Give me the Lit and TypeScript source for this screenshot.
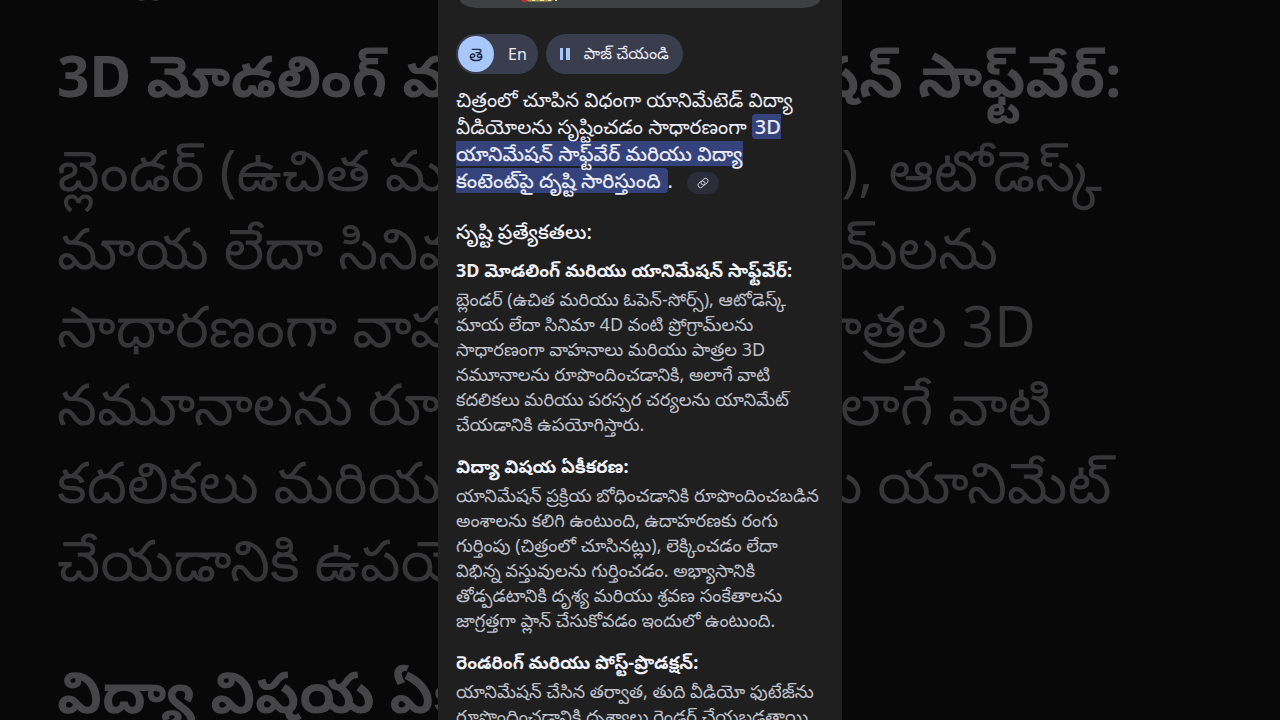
import { LitElement, html, css } from "lit";
import { customElement, property } from "lit/decorators.js";

interface Section {
  title: string;
  lines: string[];
}

const HEADING = "సృష్టి ప్రత్యేకతలు:";

const SECTIONS: Section[] = [
  {
    title: "3D మోడలింగ్ మరియు యానిమేషన్ సాఫ్ట్‌వేర్:",
    lines: [
      "బ్లెండర్ (ఉచిత మరియు ఓపెన్-సోర్స్), ఆటోడెస్క్",
      "మాయ లేదా సినిమా 4D వంటి ప్రోగ్రామ్‌లను",
      "సాధారణంగా వాహనాలు మరియు పాత్రల 3D",
      "నమూనాలను రూపొందించడానికి, అలాగే వాటి",
      "కదలికలు మరియు పరస్పర చర్యలను యానిమేట్",
      "చేయడానికి ఉపయోగిస్తారు.",
    ],
  },
  {
    title: "విద్యా విషయ ఏకీకరణ:",
    lines: [
      "యానిమేషన్ ప్రక్రియ బోధించడానికి రూపొందించబడిన",
      "అంశాలను కలిగి ఉంటుంది, ఉదాహరణకు రంగు",
      "గుర్తింపు (చిత్రంలో చూసినట్లు), లెక్కించడం లేదా",
      "విభిన్న వస్తువులను గుర్తించడం. అభ్యాసానికి",
      "తోడ్పడటానికి దృశ్య మరియు శ్రవణ సంకేతాలను",
      "జాగ్రత్తగా ప్లాన్ చేసుకోవడం ఇందులో ఉంటుంది.",
    ],
  },
  {
    title: "రెండరింగ్ మరియు పోస్ట్-ప్రొడక్షన్:",
    lines: [
      "యానిమేషన్ చేసిన తర్వాత, తుది వీడియో ఫుటేజ్‌ను",
      "రూపొందించడానికి దృశ్యాలు రెండర్ చేయబడతాయి",
    ],
  },
];

@customElement("answer-sections")
export class AnswerSections extends LitElement {
  @property({ attribute: false }) sections: Section[] = [];

  static styles = css`
    :host {
      display: block;
    }
    .heading,
    .title,
    .text {
      margin: 0;
      white-space: nowrap;
    }
    .heading {
      font-size: var(--heading-size);
      line-height: var(--heading-line);
      margin-bottom: var(--heading-gap);
      font-weight: 500;
      color: var(--strong);
    }
    .section {
      margin-bottom: var(--section-gap);
    }
    .title {
      font-size: var(--title-size);
      line-height: var(--title-line);
      margin-bottom: var(--title-gap);
      font-weight: 700;
      color: var(--strong);
    }
    .text {
      font-size: var(--text-size);
      line-height: var(--text-line);
      color: var(--soft);
    }
    .line {
      display: block;
    }
  `;

  render() {
    return html`
      <h2 class="heading">${HEADING}</h2>
      ${this.sections.map(
        (s) => html`<section class="section">
          <h3 class="title">${s.title}</h3>
          <p class="text">${s.lines.map((l) => html`<span class="line">${l}</span> `)}</p>
        </section>`
      )}
    `;
  }
}

@customElement("app-root")
export class AppRoot extends LitElement {
  static styles = css`
    :host {
      display: grid;
      height: 100vh;
      overflow: hidden;
      background: #080808;
      font-family: "Noto Sans", "Noto Sans Telugu", sans-serif;
    }
    .backdrop,
    .panel {
      grid-area: 1 / 1;
      min-width: 0;
      min-height: 0;
      overflow: hidden;
    }
    .backdrop {
      --strong: #454548;
      --soft: #363638;
      --heading-size: 63px;
      --heading-line: 80px;
      --heading-gap: 38px;
      --title-size: 57px;
      --title-line: 94px;
      --title-gap: 8px;
      --text-size: 57px;
      --text-line: 78px;
      --section-gap: 46px;
      padding-left: 57px;
    }
    .scrolled {
      margin-top: -90px;
    }
    .panel {
      --strong: #f0f1fb;
      --soft: #bfc1cc;
      --heading-size: 20px;
      --heading-line: 28px;
      --heading-gap: 9px;
      --title-size: 18px;
      --title-line: 30px;
      --title-gap: 2px;
      --text-size: 18px;
      --text-line: 25px;
      --section-gap: 14px;
      justify-self: center;
      box-sizing: border-box;
      width: min(100%, 404px);
      padding: 0 18px;
      background: #1f1f1f;
      color: #e9eaf4;
    }
    .card {
      display: flex;
      height: 8px;
      padding-left: 60px;
      margin: 0 4px 26px;
      border-radius: 0 0 22px 22px / 0 0 8px 8px;
      background: #3c4043;
    }
    .thumb {
      display: block;
      width: 38px;
      height: 2px;
    }
    .chips {
      display: flex;
      gap: 8px;
      margin-bottom: 12px;
    }
    .langs {
      display: flex;
      align-items: center;
      box-sizing: border-box;
      height: 40px;
      padding: 0 2px;
      border-radius: 20px;
      background: #3a3d4e;
    }
    button {
      border: 0;
      margin: 0;
      padding: 0;
      font: inherit;
      font-size: 16px;
      color: #e9eaf4;
      background: none;
      white-space: nowrap;
    }
    .lang {
      height: 36px;
      padding: 0 9px 0 14px;
      line-height: 34px;
    }
    .lang.active {
      width: 36px;
      padding: 0;
      border-radius: 50%;
      background: #a8c7fa;
      color: #1d2a45;
      font-size: 18px;
    }
    .pause {
      display: flex;
      align-items: center;
      gap: 12px;
      height: 40px;
      padding: 0 14px 0 12px;
      border-radius: 20px;
      background: #3a3d4e;
    }
    .intro {
      isolation: isolate;
      margin: 0 0 24px;
      font-size: 20px;
      line-height: 27px;
      white-space: nowrap;
    }
    .line {
      display: block;
    }
    mark {
      position: relative;
      display: inline-block;
      line-height: 27px;
      background: none;
      color: inherit;
      font-weight: 500;
    }
    mark::before {
      content: "";
      position: absolute;
      inset: 1px 0;
      z-index: -1;
      border-radius: inherit;
      background: #35437c;
    }
    .start {
      padding-left: 3px;
      border-radius: 4px 0 0 4px;
    }
    .end {
      padding-right: 7px;
      border-radius: 0 4px 4px 0;
    }
    .source {
      display: inline-flex;
      align-items: center;
      justify-content: center;
      width: 32px;
      height: 22px;
      margin-left: 9px;
      border-radius: 11px;
      background: #2b2e38;
      vertical-align: middle;
    }
  `;

  render() {
    return html`
      <div class="backdrop" aria-hidden="true">
        <answer-sections class="scrolled" .sections=${SECTIONS.slice(0, 2)}></answer-sections>
      </div>
      <main class="panel">
        <div class="card">
          <svg class="thumb" viewBox="0 0 38 2" aria-hidden="true">
            <path fill="#b8323c" d="M1 0h6v2H3z" />
            <path fill="#b59a48" d="M7 0h26l-2 1.500H8z" />
            <path fill="#f2e7a0" d="M12 0h3v1h-3zM20 0h4v1h-4zM28 0h3v1h-3zM35 0h2v1h-2z" />
          </svg>
        </div>
        <div class="chips">
          <div class="langs">
            <button class="lang active">తె</button>
            <button class="lang">En</button>
          </div>
          <button class="pause">
            <svg width="14" height="14" viewBox="0 0 14 14" aria-hidden="true">
              <path fill="#a8c7fa" d="M2 1h3v12H2zM8 1h4v12H8z" />
            </svg>
            <span>పాజ్ చేయండి</span>
          </button>
        </div>
        <p class="intro">
          <span class="line">చిత్రంలో చూపిన విధంగా యానిమేటెడ్ విద్యా</span>
          <span class="line">వీడియోలను సృష్టించడం సాధారణంగా <mark class="start">3D</mark></span>
          <span class="line"><mark>యానిమేషన్ సాఫ్ట్‌వేర్ మరియు విద్యా</mark></span>
          <span class="line"
            ><mark class="end">కంటెంట్‌పై దృష్టి సారిస్తుంది</mark>.
            <button class="source" aria-label="లింక్">
              <svg width="12" height="12" viewBox="0 0 24 24" fill="none" stroke="#d5d8e4" stroke-width="2" stroke-linecap="round" aria-hidden="true">
                <path d="M10 14.5a5 5 0 0 0 7 .3l3.6-3.6a5 5 0 0 0-7.1-7.1L9.300 8.300a5 5 0 0 0-.9 5.800" />
                <path d="M14 9.500a5 5 0 0 0-7-.3l-3.600 3.600a5 5 0 0 0 7.100 7.100l4.200-4.200a5 5 0 0 0 .9-5.800" />
              </svg></button
          ></span>
        </p>
        <answer-sections .sections=${SECTIONS}></answer-sections>
      </main>
    `;
  }
}
